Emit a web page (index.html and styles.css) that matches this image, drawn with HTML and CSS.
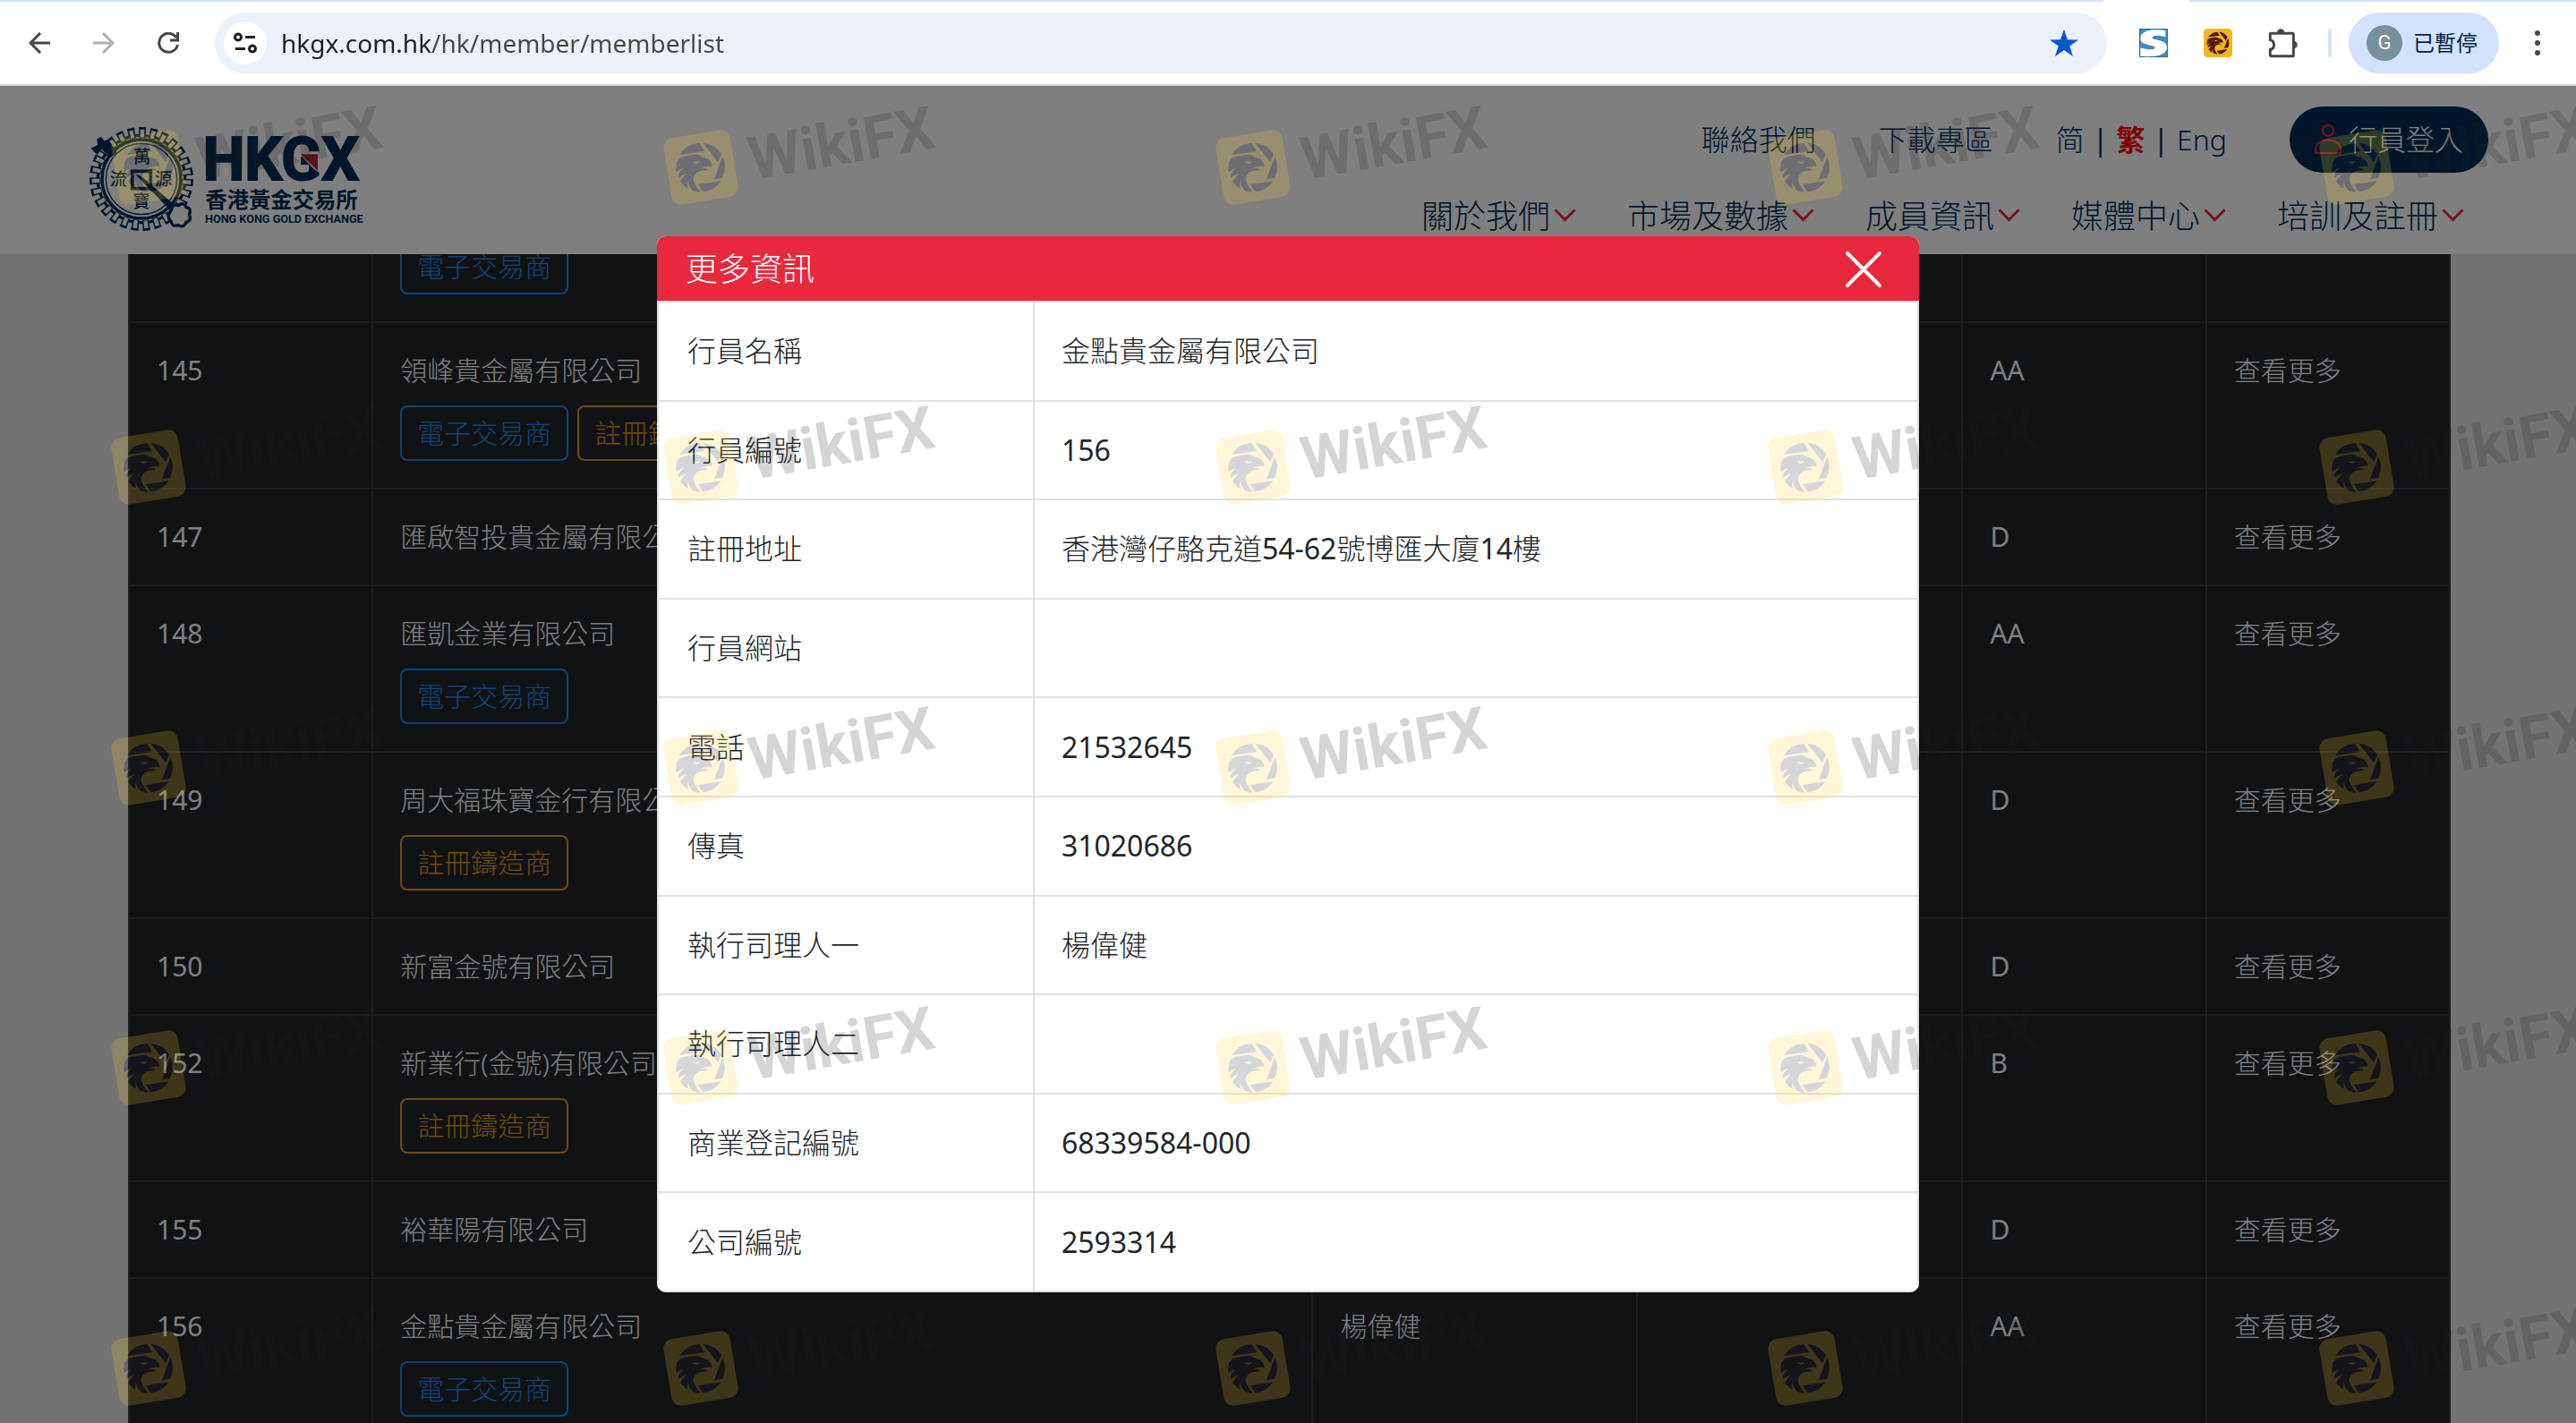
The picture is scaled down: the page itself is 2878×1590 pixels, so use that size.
FILE: index.html
```html
<!DOCTYPE html>
<html lang="zh-Hant">
<head>
    <meta charset="UTF-8">
    <meta name="viewport" content="width=device-width, initial-scale=1.0">
    <title>行員名單 - 香港黃金交易所</title>
    <link rel="stylesheet" href="styles.css">
</head>
<body>
    <!-- browser bar -->
    <div class="tab-strip"><span class="active-tab"></span></div>
    <div class="toolbar">
        <button class="tool" aria-label="Back">
            <svg width="24" height="24" viewBox="0 0 24 24" fill="none" stroke="#474747" stroke-width="3"><path d="M24 12H3M13 1L2 12l11 11"/></svg>
        </button>
        <button class="tool" aria-label="Forward">
            <svg width="24" height="24" viewBox="0 0 24 24" fill="none" stroke="#b0b0b0" stroke-width="3"><path d="M0 12h21M11 1l11 11-11 11"/></svg>
        </button>
        <button class="tool" aria-label="Reload">
            <svg width="24" height="24" viewBox="0 0 24 24" fill="none" stroke="#474747" stroke-width="3"><path d="M21 6A10.500 10.500 0 1 0 22.500 14M22.500 0v9H14"/></svg>
        </button>
        <div class="omnibox">
            <button class="site-info" aria-label="Site information">
                <svg width="26" height="24" viewBox="0 0 26 24" fill="none" stroke="#1f1f1f" stroke-width="3"><circle cx="5" cy="5.500" r="3.500"/><path d="M13 5.500h11M2 18.500h11"/><circle cx="21" cy="18.500" r="3.500"/></svg>
            </button>
            <input class="url" type="text" aria-label="Address" value="hkgx.com.hk/hk/member/memberlist">
            <button class="star" aria-label="Bookmark">
                <svg width="32" height="30" viewBox="0 0 32 30" fill="#0b57d0"><path d="M16 0l3.900 11.200L32 11.500l-9.700 7.100L26 30l-10-6.900L6 30l3.700-11.400L0 11.500l12.100-.3z"/></svg>
            </button>
        </div>
        <div class="extensions">
            <button class="tool" aria-label="S extension">
                <svg width="32" height="32" viewBox="0 0 96 96"><rect x="1.500" y="1.500" width="93" height="93" fill="#4189bf" stroke="#336a96" stroke-width="3"/><path d="M88 6C60 2 6 0 4 32c-1 27 50 20 49 32-1 10-30 6-49 0v28c30 3 88 4 89-28C94 33 45 42 44 30c0-9 26-8 44-2z" fill="#fff"/></svg>
            </button>
            <button class="tool" aria-label="WikiFX extension">
                <svg width="32" height="32" viewBox="0 0 96 96"><rect width="96" height="96" rx="13" fill="#efb71f"/><svg x="10" y="10" width="76" height="76" viewBox="66 133 166 166" fill="#56160e"><use href="#eagle"/></svg></svg>
            </button>
            <button class="tool" aria-label="Extensions">
                <svg width="33" height="33" viewBox="0 0 99 99"><path d="M8 16h74q3 0 3 3v70q0 3-3 3H11q-4 0-4-4V70c17-4 17-27 0-32V19q0-3 3-3" fill="none" stroke="#474747" stroke-width="9"/><path d="M30 13a12 12 0 0 1 25 0zM86 42a12 12 0 0 1 0 24z" fill="#474747"/></svg>
            </button>
        </div>
        <span class="divider"></span>
        <button class="profile"><span class="avatar">G</span>已暫停</button>
        <button class="tool menu" aria-label="Menu">
            <svg width="6" height="30" viewBox="0 0 6 30" fill="#474747"><circle cx="3" cy="4" r="3"/><circle cx="3" cy="15" r="3"/><circle cx="3" cy="26" r="3"/></svg>
        </button>
    </div>

    <div class="page">
        <header>
            <a class="logo" href="#" aria-label="香港黃金交易所">
                <svg width="340" height="170" viewBox="0 0 1020 510" fill="#002b54">
                    <!-- cog with an outlined tooth on every step -->
                    <g fill="none" stroke="#002b54">
                        <circle cx="234" cy="243" r="156" stroke-width="36" pathLength="108" stroke-dasharray="2.500 1.500"/>
                        <circle cx="234" cy="243" r="146" stroke-width="10"/>
                        <circle cx="234" cy="243" r="153" stroke="#fff" stroke-width="26" pathLength="108" stroke-dasharray="1.500 2.500" stroke-dashoffset="-0.500"/>
                        <circle cx="234" cy="243" r="132" stroke-width="10" fill="#fff"/>
                        <circle cx="234" cy="243" r="119" stroke-width="4"/>
                        <rect x="203" y="217" width="62" height="58" stroke-width="11"/>
                    </g>
                    <path d="M64 140l24-12-4-18 14-9 12 14 14-4 28 46-22 14-30-28-14 18-10-8z"/>
                    <path d="M212 226l22 8 122 106-14 20z"/>
                    <path d="M334 348q4-24 24-16 18-14 26 6 20 4 10 24 10 20-10 26-8 20-26 10-22 6-24-12-18-16 0-38z" fill="#fff" stroke="#002b54" stroke-width="10"/>
                    <g class="coin-text">
                        <text x="236" y="190">萬</text>
                        <text x="157" y="265">流</text>
                        <text x="308" y="265">源</text>
                        <text x="234" y="340">寶</text>
                    </g>
                    <text class="logo-name" x="440" y="246">HKGX</text>
                    <path d="M762 156h72v68l-22-14z" fill="#fff"/>
                    <path d="M768 160h57v56z" fill="#bf1f2e"/>
                    <text class="logo-zh" x="448" y="338">香港黃金交易所</text>
                    <text class="logo-en" x="447" y="389">HONG KONG GOLD EXCHANGE</text>
                </svg>
            </a>
            <nav>
                <div class="nav-top">
                    <a href="#">聯絡我們</a>
                    <a href="#">下載專區</a>
                    <div class="lang">
                        <a href="#">简</a><span>|</span><a class="current" href="#">繁</a><span>|</span><a href="#">Eng</a>
                    </div>
                    <button class="login">
                        <svg width="30" height="34" viewBox="0 0 30 34" fill="none" stroke="#e8283b" stroke-width="2"><circle cx="15" cy="7" r="6"/><path d="M1 32v-4c0-14 28-14 28 0v4z"/></svg>
                        行員登入
                    </button>
                </div>
                <div class="nav-main">
                    <a href="#">關於我們<i class="chevron"></i></a>
                    <a href="#">市場及數據<i class="chevron"></i></a>
                    <a href="#">成員資訊<i class="chevron"></i></a>
                    <a href="#">媒體中心<i class="chevron"></i></a>
                    <a href="#">培訓及註冊<i class="chevron"></i></a>
                </div>
            </nav>
        </header>

        <main>
            <table class="members">
                <colgroup><col class="c-no"><col class="c-name"><col class="c-mgr"><col class="c-mgr"><col class="c-no"><col class="c-no"></colgroup>
                <tbody>
                    <tr><td></td><td><div class="tags"><span class="tag blue">電子交易商</span></div></td><td></td><td></td><td></td><td></td></tr>
                    <tr><td class="num">145</td><td>領峰貴金屬有限公司<div class="tags"><span class="tag blue">電子交易商</span><span class="tag gold">註冊鑄造商</span></div></td><td></td><td></td><td class="num">AA</td><td><a href="#">查看更多</a></td></tr>
                    <tr><td class="num">147</td><td>匯啟智投貴金屬有限公司</td><td></td><td></td><td class="num">D</td><td><a href="#">查看更多</a></td></tr>
                    <tr><td class="num">148</td><td>匯凱金業有限公司<div class="tags"><span class="tag blue">電子交易商</span></div></td><td></td><td></td><td class="num">AA</td><td><a href="#">查看更多</a></td></tr>
                    <tr><td class="num">149</td><td>周大福珠寶金行有限公司<div class="tags"><span class="tag gold">註冊鑄造商</span></div></td><td></td><td></td><td class="num">D</td><td><a href="#">查看更多</a></td></tr>
                    <tr><td class="num">150</td><td>新富金號有限公司</td><td></td><td></td><td class="num">D</td><td><a href="#">查看更多</a></td></tr>
                    <tr><td class="num">152</td><td>新業行(金號)有限公司<div class="tags"><span class="tag gold">註冊鑄造商</span></div></td><td></td><td></td><td class="num">B</td><td><a href="#">查看更多</a></td></tr>
                    <tr><td class="num">155</td><td>裕華陽有限公司</td><td></td><td></td><td class="num">D</td><td><a href="#">查看更多</a></td></tr>
                    <tr><td class="num">156</td><td>金點貴金屬有限公司<div class="tags"><span class="tag blue">電子交易商</span></div></td><td>楊偉健</td><td></td><td class="num">AA</td><td><a href="#">查看更多</a></td></tr>
                </tbody>
            </table>
        </main>

        <div class="backdrop"></div>

        <div class="modal" role="dialog" aria-labelledby="modal-title">
            <div class="modal-header">
                <h2 id="modal-title">更多資訊</h2>
                <button class="close" aria-label="關閉">
                    <svg width="42" height="42" viewBox="0 0 42 42" stroke="#fff" stroke-width="4" stroke-linecap="round"><path d="M3 3l36 36M39 3L3 39"/></svg>
                </button>
            </div>
            <table class="details">
                <tr><th>行員名稱</th><td>金點貴金屬有限公司</td></tr>
                <tr><th>行員編號</th><td class="num">156</td></tr>
                <tr><th>註冊地址</th><td>香港灣仔駱克道<span class="num">54-62</span>號博匯大廈<span class="num">14</span>樓</td></tr>
                <tr><th>行員網站</th><td></td></tr>
                <tr><th>電話</th><td class="num">21532645</td></tr>
                <tr><th>傳真</th><td class="num">31020686</td></tr>
                <tr><th>執行司理人一</th><td>楊偉健</td></tr>
                <tr><th>執行司理人二</th><td></td></tr>
                <tr><th>商業登記編號</th><td class="num">68339584-000</td></tr>
                <tr><th>公司編號</th><td class="num">2593314</td></tr>
            </table>
        </div>
    </div>

    <!-- watermark, repeated over the whole window -->
    <svg class="watermark" aria-hidden="true">
        <defs>
            <g id="eagle">
                <path d="M77 174L161 162 144 135A83 83 0 0 0 77 174zM156 134A83 83 0 0 1 218 172L207 199zM222 180A83 83 0 0 1 221 251L194 256zM140 273L217 262A83 83 0 0 1 156 298z"/>
                <path fill-rule="evenodd" d="M66 212Q68 194 77 186 88 179 104 178 117 173 134 173 146 174 152 181 172 184 180 195 187 203 186 214 178 210 168 213 156 214 139 223 154 217 165 220 171 222 174 226 158 225 146 229 126 235 124 255 125 272 147 299 133 299 122 294L114 284Q106 272 107 260 103 275 106 286L99 284Q90 274 80 264 86 250 102 236 86 242 74 251 72 243 78 232 84 225 93 218 80 221 67 232 65 222 66 214 76 204 90 200 76 203 66 212zM121 195Q134 199 145 195 143 203 134 204 126 203 121 195z"/>
            </g>
            <g id="wm" opacity="0.19">
                <g transform="scale(0.333) translate(-149 -216)">
                    <rect x="36" y="103" width="226" height="226" rx="32" fill="#ffd42e" transform="rotate(-9.500 149 216)"/>
                    <use href="#eagle" fill="#232838"/>
                </g>
                <text transform="translate(58 14) rotate(-10)">WikiFX</text>
            </g>
            <g id="wm-row">
                <use href="#wm" x="166"/>
                <use href="#wm" x="783"/>
                <use href="#wm" x="1400"/>
                <use href="#wm" x="2017"/>
                <use href="#wm" x="2633"/>
            </g>
        </defs>
        <use href="#wm-row" y="187"/>
        <use href="#wm-row" y="522"/>
        <use href="#wm-row" y="858"/>
        <use href="#wm-row" y="1193"/>
        <use href="#wm-row" y="1529"/>
    </svg>
</body>
</html>
```
FILE: styles.css
```css
* {
    box-sizing: border-box;
}
body {
    margin: 0;
    height: 100vh;
    display: flex;
    flex-direction: column;
    overflow: hidden;
    font-family: "Noto Sans", "Noto Sans CJK TC", sans-serif;
    font-weight: 300;
    font-size: 30px;
    line-height: 46px;
    background: #fff;
}
a {
    color: inherit;
    text-decoration: none;
}
button {
    padding: 0;
    border: none;
    background: none;
    font: inherit;
    cursor: pointer;
}
svg {
    display: block;
}

/* browser bar */
.tab-strip {
    display: flex;
    height: 2px;
    background: #d3e3fd;
}
.active-tab {
    width: 96px;
    margin-left: auto;
    margin-right: 432px;
    background: #fff;
}
.toolbar {
    display: flex;
    align-items: center;
    height: 94px;
    padding: 0 40px 0 32px;
    border-bottom: 2px solid #dadce0;
    background: #fff;
}
.toolbar > .tool {
    margin-right: 48px;
}
.omnibox {
    display: flex;
    flex: 1;
    align-items: center;
    height: 68px;
    margin: 0 36px 0 -8px;
    padding: 0 32px 0 10px;
    border-radius: 34px;
    background: #ecf1fa;
}
.site-info {
    display: flex;
    align-items: center;
    justify-content: center;
    width: 48px;
    height: 48px;
    border-radius: 50%;
    background: #fff;
}
.url {
    flex: 1;
    margin-left: 16px;
    padding: 0;
    border: none;
    outline: none;
    font: 400 28px/46px "Noto Sans", sans-serif;
    color: transparent;
    background: linear-gradient(90deg, #1f1f1f 166px, #474747 166px);
    -webkit-background-clip: text;
    background-clip: text;
}
.extensions {
    display: flex;
    gap: 40px;
}
.divider {
    width: 4px;
    height: 32px;
    margin: 0 19px 0 34px;
    border-radius: 2px;
    background: #d3e3fd;
}
.profile {
    display: flex;
    align-items: center;
    gap: 12px;
    height: 68px;
    margin-right: 40px;
    padding: 0 24px 0 20px;
    border-radius: 34px;
    background: #d3e3fd;
    color: #041e49;
    font-size: 24px;
    font-weight: 400;
}
.avatar {
    width: 40px;
    height: 40px;
    border-radius: 50%;
    background: #78909c;
    color: #fff;
    font: 400 22px/40px Roboto, sans-serif;
}
.toolbar > .menu {
    margin-right: 0;
}

/* site */
.page {
    position: relative;
    flex: 1;
    overflow: hidden;
    background: #e6e6e6;
}
header {
    position: relative;
    z-index: 1;
    display: flex;
    justify-content: space-between;
    height: 188px;
    padding: 23px 98px 0 80px;
    background: #fff;
    color: #002b54;
}
.coin-text {
    font-size: 58px;
    font-weight: 500;
    text-anchor: middle;
}
.logo-name {
    font: 700 198px Roboto, sans-serif;
    stroke: #002b54;
    stroke-width: 6px;
}
.logo-zh {
    font-size: 73px;
    font-weight: 700;
}
.logo-en {
    font: 700 38px Roboto, sans-serif;
}
.nav-top,
.nav-main,
.lang {
    display: flex;
    align-items: center;
}
.nav-top {
    justify-content: flex-end;
    gap: 70px;
    height: 74px;
    font-size: 32px;
}
.lang {
    gap: 9px;
}
.lang span {
    font-weight: 400;
}
.lang .current {
    color: #ff0000;
    font-weight: 700;
}
.login {
    display: flex;
    align-items: center;
    gap: 8px;
    height: 74px;
    padding: 0 28px;
    border-radius: 37px;
    background: #002b54;
    color: #fff;
}
.nav-main {
    justify-content: flex-end;
    gap: 57px;
    margin: 26px 27px 0 0;
    font-size: 36px;
}
.nav-main a {
    display: flex;
    align-items: center;
}
.chevron {
    width: 17px;
    height: 17px;
    margin: -14px 4px 0 8px;
    border: solid #e8283b;
    border-width: 0 3px 3px 0;
    transform: rotate(45deg);
}
main {
    margin: -65px 140px 0 143px;
}
.members {
    width: 100%;
    table-layout: fixed;
    border-collapse: collapse;
    background: #212529;
    color: #fff;
}
.c-no {
    width: 10.5%;
}
.c-name {
    width: 40.5%;
}
.c-mgr {
    width: 14%;
}
.members td {
    padding: 30px;
    border: 2px solid #373b3e;
    vertical-align: top;
}
.tags {
    display: flex;
    gap: 10px;
    margin-top: 16px;
}
.tag {
    height: 62px;
    padding: 0 17px;
    border: 2px solid;
    border-radius: 8px;
    line-height: 58px;
}
.blue {
    color: #2486e4;
}
.gold {
    color: #de981e;
}

/* more info dialog */
.backdrop {
    position: absolute;
    inset: 0;
    z-index: 2;
    background: rgba(0, 0, 0, 0.5);
}
.modal {
    position: absolute;
    z-index: 3;
    top: 168px;
    left: 0;
    right: 0;
    width: 49%;
    margin: 0 auto;
    border-radius: 10px;
    overflow: hidden;
    background: #fff;
    color: #212529;
}
.modal-header {
    display: flex;
    align-items: center;
    justify-content: space-between;
    height: 72px;
    padding: 2px 41px 0 32px;
    background: #e8283b;
    color: #fff;
}
.modal-header h2 {
    margin: 0;
    font-size: 36px;
    font-weight: 300;
}
.details {
    width: 100%;
    height: 1108px;
    border-collapse: collapse;
    font-size: 32px;
}
.details th,
.details td {
    padding: 0 32px;
    border: 2px solid #dee2e6;
    text-align: left;
    font-weight: 300;
}
.details th {
    width: 420px;
}
.details td {
    padding-left: 30px;
}
.members .num,
.details .num {
    font-weight: 400;
}

.watermark {
    position: fixed;
    inset: 0;
    z-index: 10;
    width: 100%;
    height: 100%;
    pointer-events: none;
}
.watermark text {
    font: 700 67px Roboto, sans-serif;
    fill: #232323;
}
```
